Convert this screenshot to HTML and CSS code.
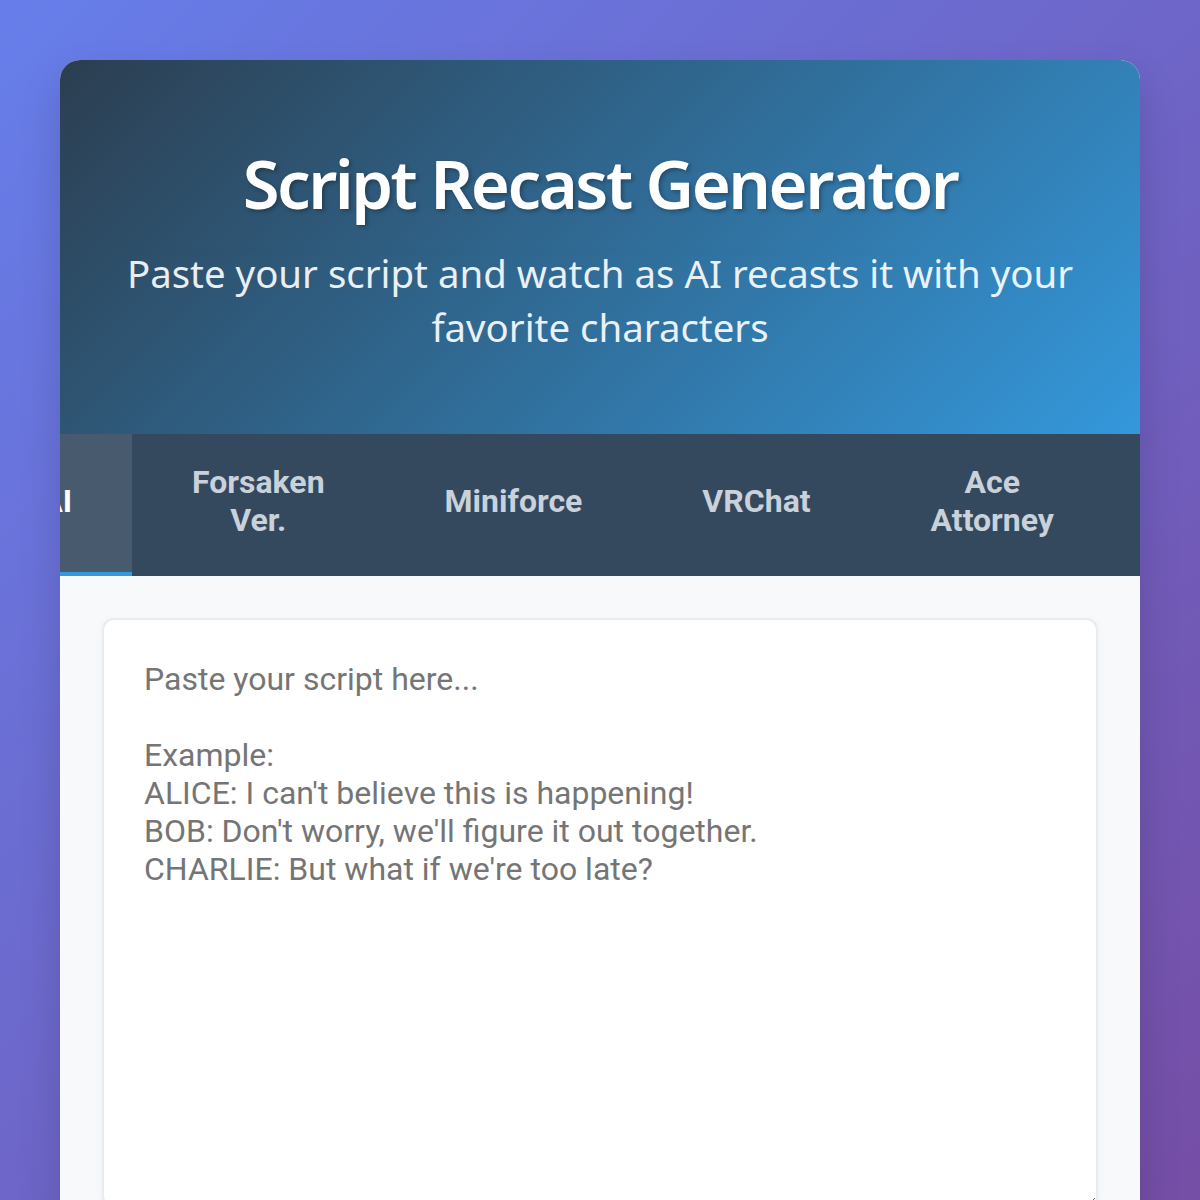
FILE: index.html
```html
<!DOCTYPE html>
<html lang="en">
<head>
    <meta charset="UTF-8" />
    <meta name="viewport" content="width=device-width, initial-scale=1" />
    <title>Script Recast Generator</title>
    <link rel="stylesheet" href="styles.css">
</head>
<body>
    <div class="container">
        <header class="header">
            <h1>Script Recast Generator</h1>
            <p>Paste your script and watch as AI recasts it with your favorite characters</p>
        </header>

        <nav class="tabs">
            <button class="tab active">Character.AI</button>
            <button class="tab">Forsaken Ver.</button>
            <button class="tab">Miniforce</button>
            <button class="tab">VRChat</button>
            <button class="tab">Ace Attorney</button>
            <button class="tab">Undertale</button>
        </nav>

        <main class="content">
            <textarea id="scriptInput" class="script-input" placeholder="Paste your script here...

Example:
ALICE: I can't believe this is happening!
BOB: Don't worry, we'll figure it out together.
CHARLIE: But what if we're too late?"></textarea>
        </main>
    </div>
</body>
</html>
```

FILE: styles.css
```css
/* Base */
* {
    box-sizing: border-box;
}
body {
    margin: 0;
    padding: 60px;
    min-height: 100vh;
    font-family: 'Noto Sans', 'Open Sans', Arial, sans-serif;
    background: linear-gradient(135deg, #667eea 0%, #764ba2 100%);
    color: #333;
}
.container {
    max-width: 1080px;
    margin: 0 auto;
    background: #fff;
    border-radius: 20px;
    overflow: hidden;
    box-shadow: 0 20px 40px rgba(0, 0, 0, 0.15);
}

/* Header */
.header {
    background: linear-gradient(135deg, #2c3e50 0%, #3498db 100%);
    color: #fff;
    text-align: center;
    padding: 80px 60px 80px;
}
.header h1 {
    margin: 0 0 20px;
    font-size: 67px;
    font-weight: 600;
    letter-spacing: -2.5px;
    line-height: 86px;
    text-shadow: 2px 2px 4px rgba(0, 0, 0, 0.3);
}
.header p {
    margin: 0;
    font-size: 2.4rem;
    line-height: 54px;
    opacity: 0.9;
}

/* Tabs */
.tabs {
    display: flex;
    justify-content: center;
    padding-left: 8px;
    background: #34495e;
    overflow: hidden;
}
.tab {
    padding: 29px 60px 33px;
    background: none;
    border: none;
    border-bottom: 4px solid transparent;
    color: #c9d1da;
    font-family: Roboto, Arial, sans-serif;
    font-size: 32px;
    font-weight: 700;
    line-height: 38px;
    cursor: pointer;
    transition: all 0.3s;
}
.tab:hover {
    color: #fff;
}
.tab.active {
    background: rgba(255, 255, 255, 0.1);
    color: #fff;
    border-bottom-color: #3498db;
}

/* Input */
.content {
    background: #f8f9fa;
    padding: 42px 42px 60px;
}
.script-input {
    display: block;
    width: 100%;
    height: 590px;
    padding: 40px;
    border: 2px solid #e9ecef;
    border-radius: 12px;
    background: #fff;
    font-family: Roboto, Arial, sans-serif;
    font-size: 32px;
    line-height: 38px;
    color: #333;
    resize: vertical;
    box-shadow: 0 2px 8px rgba(0, 0, 0, 0.04);
}
.script-input:focus {
    outline: none;
    border-color: #3498db;
}
```
